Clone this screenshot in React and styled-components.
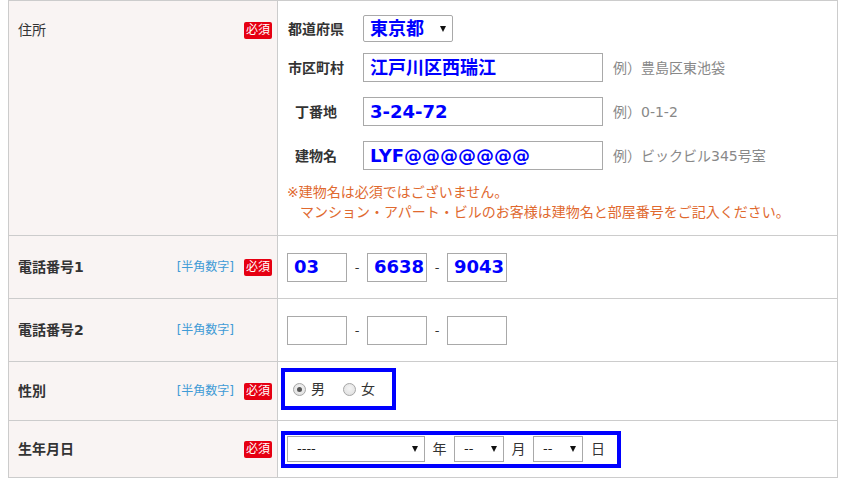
import React from "react";
import styled, { createGlobalStyle } from "styled-components";

const Global = createGlobalStyle`
  html, body { margin: 0; padding: 0; background: #fff; }
  body {
    font-family: "DejaVu Sans", "Noto Sans CJK JP", sans-serif;
    color: #333;
    font-size: 14px;
  }
`;

const Page = styled.div`
  padding: 0 0 0 8px;
`;

const Table = styled.table`
  border-collapse: collapse;
  table-layout: fixed;
  width: 830px;
`;

const Row = styled.tr`
  height: ${(p) => (p.$h ? `${p.$h}px` : "auto")};
`;

const LabelCell = styled.th`
  width: 254px;
  background: #f9f4f3;
  border: 1px solid #cccccc;
  padding: ${(p) => (p.$top ? "19px 5px 0 9px" : "0 5px 0 9px")};
  vertical-align: ${(p) => (p.$top ? "top" : "middle")};
  text-align: left;
  font-weight: normal;
`;

const LabelInner = styled.div`
  display: flex;
  align-items: center;
  height: 20px;
`;

const LabelText = styled.span`
  font-size: 14px;
  font-weight: ${(p) => (p.$light ? "normal" : "bold")};
  line-height: 20px;
  color: #333;
`;

const Hint = styled.span`
  margin-left: auto;
  font-size: 12px;
  line-height: 17px;
  color: #3f9bd6;
`;

const Badge = styled.span`
  margin-left: ${(p) => (p.$alone ? "auto" : "10px")};
  display: inline-flex;
  align-items: center;
  justify-content: center;
  width: 28px;
  height: 17px;
  background: #e60012;
  color: #fff;
  font-size: 12px;
  line-height: 17px;
  border-radius: 2px;
`;

const BadgeSpacer = styled.span`
  width: 28px;
  margin-left: 10px;
`;

const FieldCell = styled.td`
  border: 1px solid #cccccc;
  background: #fff;
  padding: ${(p) => (p.$pad ? p.$pad : "0 9px")};
  vertical-align: middle;
`;

const FieldRow = styled.div`
  display: flex;
  align-items: center;
  margin-top: ${(p) => p.$mt || 0}px;
`;

const SubLabel = styled.span`
  width: 58px;
  margin-right: 18px;
  text-align: center;
  font-size: 14px;
  font-weight: bold;
  line-height: 20px;
  color: #333;
`;

const TextBox = styled.div`
  box-sizing: border-box;
  width: ${(p) => p.$w}px;
  height: ${(p) => p.$h || 29}px;
  border: 1px solid #a9a9a9;
  background: #fff;
  display: flex;
  align-items: center;
  padding-left: 6px;
  color: #0000ff;
  font-weight: bold;
  font-size: 18px;
  line-height: 20px;
  white-space: nowrap;
`;

const Example = styled.span`
  margin-left: 10px;
  font-size: 14px;
  line-height: 20px;
  color: #888;
`;

const SelectBox = styled.div`
  box-sizing: border-box;
  width: ${(p) => p.$w}px;
  height: ${(p) => p.$h}px;
  border: 1px solid #a9a9a9;
  border-radius: ${(p) => (p.$round ? "2px" : "0")};
  background: #fff;
  display: flex;
  align-items: center;
  padding: 0 6px 0 ${(p) => p.$pl || 6}px;
  color: ${(p) => (p.$blue ? "#0000ff" : "#222")};
  font-weight: ${(p) => (p.$blue ? "bold" : "normal")};
  font-size: ${(p) => (p.$blue ? "18px" : "13px")};
  line-height: 20px;
`;

const Arrow = styled.span`
  margin-left: auto;
  width: 0;
  height: 0;
  border-left: 3.5px solid transparent;
  border-right: 3.5px solid transparent;
  border-top: 6px solid #111;
`;

const Note = styled.div`
  margin-top: 12px;
  color: #e0692f;
  font-size: 14px;
  line-height: 20px;
`;

const NoteIndent = styled.div`
  padding-left: 13px;
`;

const Dash = styled.span`
  width: 20px;
  text-align: center;
  font-size: 13px;
  color: #333;
`;

const BlueBox = styled.div`
  box-sizing: border-box;
  display: inline-flex;
  align-items: center;
  height: ${(p) => p.$h}px;
  margin: ${(p) => p.$mt || 0}px 0 0 -6px;
  border: 4px solid #0000ff;
  background: #fff;
  padding: ${(p) => p.$pad};
  vertical-align: middle;
`;

const RadioItem = styled.label`
  display: inline-flex;
  align-items: center;
  margin-right: ${(p) => p.$mr || 0}px;
  font-size: 14px;
  line-height: 20px;
  color: #333;
`;

const RadioDot = styled.span`
  box-sizing: border-box;
  width: 13px;
  height: 13px;
  border-radius: 50%;
  border: 1px solid #a6a6a6;
  background: radial-gradient(circle at 50% 40%, #f4f4f4 0%, #dcdcdc 100%);
  margin-right: 5px;
  display: inline-flex;
  align-items: center;
  justify-content: center;
  &::after {
    content: "";
    width: 5px;
    height: 5px;
    border-radius: 50%;
    background: ${(p) => (p.$checked ? "#555" : "transparent")};
  }
`;

const Unit = styled.span`
  width: ${(p) => p.$w || 29}px;
  text-align: center;
  font-size: 14px;
  line-height: 20px;
  color: #333;
`;

export default function App() {
  return (
    <>
      <Global />
      <Page>
        <Table>
          <tbody>
            <Row>
              <LabelCell $top>
                <LabelInner>
                  <LabelText $light>住所</LabelText>
                  <Badge $alone>必須</Badge>
                </LabelInner>
              </LabelCell>
              <FieldCell $pad="14px 9px 13px 9px">
                <FieldRow>
                  <SubLabel>都道府県</SubLabel>
                  <SelectBox $w={90} $h={27} $blue $round>
                    東京都
                    <Arrow />
                  </SelectBox>
                </FieldRow>
                <FieldRow $mt={11}>
                  <SubLabel>市区町村</SubLabel>
                  <TextBox $w={240}>江戸川区西瑞江</TextBox>
                  <Example>例）豊島区東池袋</Example>
                </FieldRow>
                <FieldRow $mt={15}>
                  <SubLabel>丁番地</SubLabel>
                  <TextBox $w={240}>3-24-72</TextBox>
                  <Example>例）0-1-2</Example>
                </FieldRow>
                <FieldRow $mt={15}>
                  <SubLabel>建物名</SubLabel>
                  <TextBox $w={240}>LYF@@@@@@@</TextBox>
                  <Example>例）ビックビル345号室</Example>
                </FieldRow>
                <Note>
                  <div>※建物名は必須ではございません。</div>
                  <NoteIndent>マンション・アパート・ビルのお客様は建物名と部屋番号をご記入ください。</NoteIndent>
                </Note>
              </FieldCell>
            </Row>
            <Row $h={63}>
              <LabelCell>
                <LabelInner>
                  <LabelText>電話番号1</LabelText>
                  <Hint>[半角数字]</Hint>
                  <Badge>必須</Badge>
                </LabelInner>
              </LabelCell>
              <FieldCell>
                <FieldRow>
                  <TextBox $w={60}>03</TextBox>
                  <Dash>-</Dash>
                  <TextBox $w={60}>6638</TextBox>
                  <Dash>-</Dash>
                  <TextBox $w={60}>9043</TextBox>
                </FieldRow>
              </FieldCell>
            </Row>
            <Row $h={63}>
              <LabelCell>
                <LabelInner>
                  <LabelText>電話番号2</LabelText>
                  <Hint>[半角数字]</Hint>
                  <BadgeSpacer />
                </LabelInner>
              </LabelCell>
              <FieldCell>
                <FieldRow>
                  <TextBox $w={60} />
                  <Dash>-</Dash>
                  <TextBox $w={60} />
                  <Dash>-</Dash>
                  <TextBox $w={60} />
                </FieldRow>
              </FieldCell>
            </Row>
            <Row $h={59}>
              <LabelCell>
                <LabelInner>
                  <LabelText>性別</LabelText>
                  <Hint>[半角数字]</Hint>
                  <Badge>必須</Badge>
                </LabelInner>
              </LabelCell>
              <FieldCell>
                <BlueBox $h={42} $mt={-4} $pad="0 17px 0 8px">
                  <RadioItem $mr={18}>
                    <RadioDot $checked />男
                  </RadioItem>
                  <RadioItem>
                    <RadioDot />女
                  </RadioItem>
                </BlueBox>
              </FieldCell>
            </Row>
            <Row $h={57}>
              <LabelCell>
                <LabelInner>
                  <LabelText>生年月日</LabelText>
                  <Badge $alone>必須</Badge>
                </LabelInner>
              </LabelCell>
              <FieldCell>
                <BlueBox $h={37} $pad="0 4px 0 2px">
                  <SelectBox $w={138} $h={26} $pl={9}>
                    ----
                    <Arrow />
                  </SelectBox>
                  <Unit>年</Unit>
                  <SelectBox $w={50} $h={26} $pl={9}>
                    --
                    <Arrow />
                  </SelectBox>
                  <Unit>月</Unit>
                  <SelectBox $w={50} $h={26} $pl={9}>
                    --
                    <Arrow />
                  </SelectBox>
                  <Unit $w={30}>日</Unit>
                </BlueBox>
              </FieldCell>
            </Row>
          </tbody>
        </Table>
      </Page>
    </>
  );
}
